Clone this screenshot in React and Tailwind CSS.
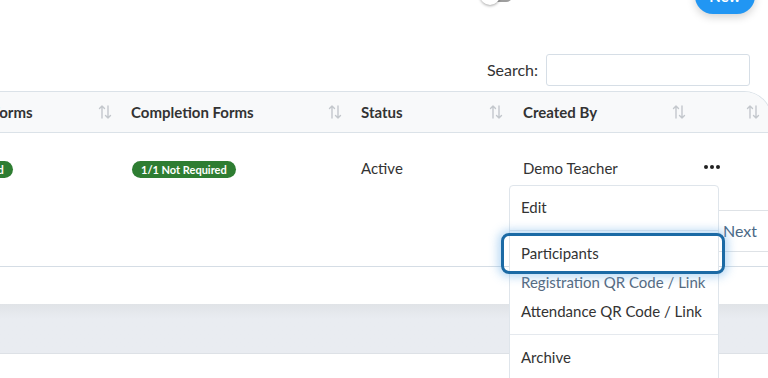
import React from 'react';

function SortIcon() {
  return (
    <svg width="14" height="16" viewBox="0 0 14 16" fill="none" stroke="#c3c7cc" strokeWidth="1.4" strokeLinecap="round" strokeLinejoin="round">
      <path d="M4 14V2M1.5 4.5L4 2l2.5 2.5" />
      <path d="M10 2v12M7.5 11.5L10 14l2.5-2.5" />
    </svg>
  );
}

function HeadCell({ label, pl = 'pl-3', pr = 'pr-[7px]', children }) {
  return (
    <div className={`flex items-center justify-between ${pl} ${pr} h-[40px]`}>
      <span className="text-[15px] font-bold text-[#333] whitespace-nowrap">{label}</span>
      {children}
    </div>
  );
}

function Badge({ children }) {
  return (
    <span className="inline-block rounded-full bg-[#2e7d32] text-white text-[11px] font-bold px-[9px] leading-[17px] whitespace-nowrap">{children}</span>
  );
}

export default function App() {
  return (
    <div className="relative w-[768px] h-[378px] overflow-hidden bg-white text-[#333]" style={{ fontFamily: 'Lato, "Noto Sans", sans-serif' }}>
      {/* top bar, mostly scrolled out of view */}
      <div className="flex justify-end items-center h-[36px] -mt-[22px] pr-[13px]">
        <div className="flex items-center gap-[12px] mr-[40px] mb-[6px]">
          <div className="relative w-[26px] h-[14px] rounded-full bg-[#9e9e9e] ml-[8px] mt-[4px]">
            <div className="absolute -left-[7px] -top-[3px] w-[20px] h-[20px] rounded-full bg-white shadow-[0_1px_3px_rgba(0,0,0,0.35)]" />
          </div>
          <span className="text-[13px] text-[#a5a5a5] whitespace-nowrap mt-[6px]">Show Archived Classes</span>
        </div>
        <button className="h-[36px] w-[60px] rounded-full bg-[#2196f3] text-white font-bold text-[15px] shadow-[0_3px_8px_rgba(0,0,0,0.18)]">New</button>
      </div>

      {/* search */}
      <div className="flex justify-end items-center gap-2 mt-[40px] pr-[18px]">
        <label className="text-[16px] text-[#333]">Search:</label>
        <input className="w-[204px] h-[32px] border border-[#d6dee6] rounded-[3px] outline-none" />
      </div>

      {/* table */}
      <div className="mt-[5px] -ml-[115px] w-[887px] border-t border-r border-[#dbe2e8] rounded-tr-[28px] overflow-hidden">
        <div className="grid grid-cols-[234px_230px_162px_186px_75px] bg-[#f8f9fa] border-b border-[#dbe2e8]">
          <HeadCell label="Registration Forms" pl="pl-[22px]"><SortIcon /></HeadCell>
          <HeadCell label="Completion Forms"><SortIcon /></HeadCell>
          <HeadCell label="Status" pr="pr-[8px]"><SortIcon /></HeadCell>
          <HeadCell label="Created By" pr="pr-[11px]"><SortIcon /></HeadCell>
          <div className="flex items-center justify-end pr-[12px] h-[40px]"><SortIcon /></div>
        </div>
        <div className="grid grid-cols-[234px_230px_162px_186px_75px] h-[70px] items-center text-[15px]">
          <div className="pl-[24px]"><Badge>1/1 Not Required</Badge></div>
          <div className="pl-[13px]"><Badge>1/1 Not Required</Badge></div>
          <div className="pl-3">Active</div>
          <div className="pl-3">Demo Teacher</div>
          <div className="pl-[7px] flex gap-[2px] -mt-[2px]">
            <span className="w-[4px] h-[4px] rounded-full bg-[#222]" />
            <span className="w-[4px] h-[4px] rounded-full bg-[#222]" />
            <span className="w-[4px] h-[4px] rounded-full bg-[#222]" />
          </div>
        </div>
      </div>

      {/* pagination */}
      <div className="flex justify-end h-[63px] pt-[7px]">
        <div className="flex h-[42px] border-y border-[#dee2e6] -mr-[20px]">
          <span className="px-3 flex items-center text-[15px] text-[#8a9199]">Previous</span>
          <span className="flex items-center text-[16px] text-[#4b6986] w-[65px]">Next</span>
        </div>
      </div>
      <div className="border-t border-[#d5dde5] h-[38px]" />
      <div className="h-[50px] bg-gradient-to-b from-[#e0e3e7] to-[#e9ecf1] from-[0%] to-[30%] border-b border-[#dde1e6]" />

      {/* dropdown menu */}
      <div className="absolute left-[509px] top-[185px] w-[210px] h-[210px] bg-white border border-[#dfe5eb] rounded-[4px] pt-[7px] text-[15px] text-[#333] whitespace-nowrap">
        <div className="px-[11px] py-1 leading-[21px]">Edit</div>
        <div className="my-2 border-t border-[#e5e9ee]" />
        <div className="relative px-[11px] py-1 leading-[21px]">
          <span className="absolute -left-[9px] -right-[7px] -top-[6px] -bottom-[6px] rounded-[8px] border-[3px] border-[#1b6aa5] shadow-[0_0_10px_3px_rgba(100,170,230,0.45)]" />
          <span className="relative">Participants</span>
        </div>
        <div className="px-[11px] py-1 leading-[21px] text-[#55697e]">Registration QR Code / Link</div>
        <div className="px-[11px] py-1 leading-[21px]">Attendance QR Code / Link</div>
        <div className="my-2 border-t border-[#e5e9ee]" />
        <div className="px-[11px] py-1 leading-[21px]">Archive</div>
      </div>
    </div>
  );
}
